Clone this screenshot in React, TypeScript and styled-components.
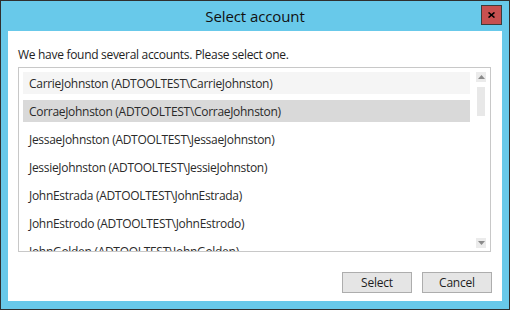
import React from 'react'
import styled, { createGlobalStyle } from 'styled-components'

const GlobalStyle = createGlobalStyle`
    html, body {
        margin: 0;
        padding: 0;
        background: #ffffff;
    }
    * {
        box-sizing: border-box;
    }
`

const Window = styled.div`
    width: 510px;
    height: 310px;
    border: 1px solid #2f2f2f;
    background-color: #68c9ea;
    display: flex;
    flex-direction: column;
    font-family: "Open Sans", "Noto Sans", sans-serif;
    color: #1e1e1e;
`

const TitleBar = styled.div`
    height: 30px;
    display: grid;
    grid-template-columns: 1fr auto 1fr;
    align-items: start;
`

const Title = styled.div`
    grid-column: 2;
    font-size: 15px;
    line-height: 30px;
    letter-spacing: -0.1px;
    color: #111;
`

const CloseButton = styled.button`
    grid-column: 3;
    justify-self: end;
    margin: 4px 7px 0 0;
    width: 21px;
    height: 20px;
    padding: 0;
    border: 1px solid #3c3c3c;
    background-color: #c75050;
    display: flex;
    align-items: center;
    justify-content: center;
`

const Client = styled.div`
    flex: 1;
    margin: 0 7px 8px 7px;
    background-color: #ffffff;
    padding: 16px 10px 0 10px;
    display: flex;
    flex-direction: column;
`

const Prompt = styled.div`
    font-size: 12px;
    line-height: 16px;
    letter-spacing: -0.3px;
    margin-bottom: 4px;
`

const ListBox = styled.div`
    height: 185px;
    margin-right: 1px;
    border: 1px solid #c8c8c8;
    display: flex;
    overflow: hidden;
`

const Items = styled.div`
    flex: 1;
    padding: 4px 0 0 4px;
    overflow: hidden;
`

const Item = styled.div<{ $state?: 'hover' | 'selected' }>`
    height: 22px;
    margin-bottom: 6px;
    padding: 2px 0 0 6px;
    font-size: 12px;
    line-height: 20px;
    letter-spacing: -0.3px;
    color: #2a2a2a;
    white-space: nowrap;
    background-color: ${p => p.$state === 'selected' ? '#d9d9d9' : p.$state === 'hover' ? '#f5f5f5' : 'transparent'};
`

const ScrollBar = styled.div`
    width: 20px;
    padding: 4px 4px 3px 6px;
    display: flex;
    flex-direction: column;
`

const ArrowButton = styled.div`
    width: 10px;
    height: 10px;
    background-color: #ebebeb;
    display: flex;
    align-items: center;
    justify-content: center;
`

const Track = styled.div`
    flex: 1;
    padding: 5px 1px 0 1px;
`

const Thumb = styled.div`
    height: 29px;
    background-color: #e8e8e8;
`

const Footer = styled.div`
    display: flex;
    justify-content: flex-end;
    gap: 10px;
    margin-top: 20px;
`

const DialogButton = styled.button`
    width: 70px;
    height: 21px;
    padding: 0;
    border: 1px solid #adadad;
    background-color: #e5e5e5;
    font-family: inherit;
    font-size: 12px;
    letter-spacing: -0.2px;
    color: #1e1e1e;
`

const accounts = [
    'CarrieJohnston',
    'CorraeJohnston',
    'JessaeJohnston',
    'JessieJohnston',
    'JohnEstrada',
    'JohnEstrodo',
    'JohnGolden',
]

function Arrow(props: { down?: boolean }) {
    return (
        <svg width="7" height="4" viewBox="0 0 7 4">
            {props.down
                ? <polygon points="0,0 7,0 3.5,4" fill="#8a8a8a" />
                : <polygon points="3.5,0 7,4 0,4" fill="#8a8a8a" />}
        </svg>
    )
}

export default function App() {
    return (
        <>
            <GlobalStyle />
            <Window>
                <TitleBar>
                    <Title>Select account</Title>
                    <CloseButton>
                        <svg width="7" height="6" viewBox="0 0 7 6">
                            <path d="M0.5 0.5 L6.5 5.5 M6.5 0.5 L0.5 5.5" stroke="#000" strokeWidth="1.6" />
                        </svg>
                    </CloseButton>
                </TitleBar>
                <Client>
                    <Prompt>We have found several accounts. Please select one.</Prompt>
                    <ListBox>
                        <Items>
                            {accounts.map((name, i) => (
                                <Item key={name} $state={i === 0 ? 'hover' : i === 1 ? 'selected' : undefined}>
                                    {name} (ADTOOLTEST\{name})
                                </Item>
                            ))}
                        </Items>
                        <ScrollBar>
                            <ArrowButton><Arrow /></ArrowButton>
                            <Track><Thumb /></Track>
                            <ArrowButton><Arrow down /></ArrowButton>
                        </ScrollBar>
                    </ListBox>
                    <Footer>
                        <DialogButton>Select</DialogButton>
                        <DialogButton>Cancel</DialogButton>
                    </Footer>
                </Client>
            </Window>
        </>
    )
}
